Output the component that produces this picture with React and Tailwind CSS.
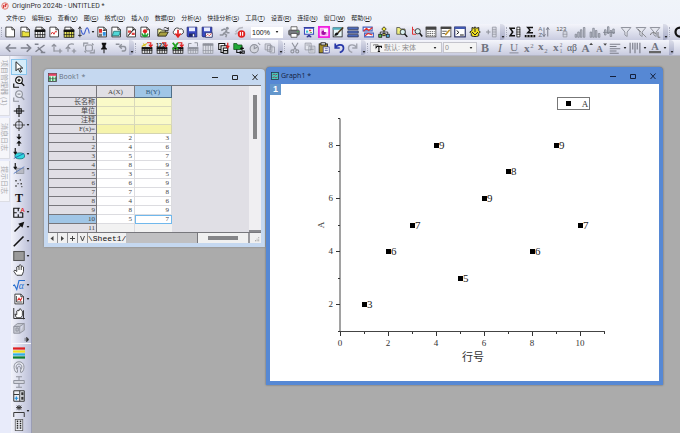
import React from "react";

const INK = "#111111";
const DIM = "#8f929c";

function Sheet({ children }) {
  return (
    <>
      <path d="M2.5 1.5h8l3.5 3.5v9.5h-11.5z" fill="#fff" stroke={INK} />
      <path d="M10.5 1.5v3.5h3.5" fill="none" stroke={INK} />
      {children}
    </>
  );
}

function Cells({ color = INK, fill = "#fff", y = 5 }) {
  return (
    <>
      <rect x="1.5" y={y + 0.5} width="13" height={15 - y - 0.5} fill={fill} stroke={color} />
      <rect x="1" y={y} width="14" height="3" fill={color} />
      <path d={`M5 ${y}V15M8.2 ${y}V15M11.5 ${y}V15M1 11.5H15`} stroke={color} fill="none" />
    </>
  );
}

function RedArrow() {
  return <path d="M8 1h5v4M10.5 3.5l2.5 3 2.5-3" fill="none" stroke="#e02020" strokeWidth="1.6" />;
}

function Glyph({ x = 8, y = 13, size = 14, color = INK, bold, italic, sans, children }) {
  return (
    <text
      x={x}
      y={y}
      fontSize={size}
      textAnchor="middle"
      fill={color}
      fontWeight={bold ? 700 : 400}
      fontStyle={italic ? "italic" : "normal"}
      fontFamily={sans ? "'Liberation Sans', sans-serif" : "'Liberation Serif', serif"}
    >
      {children}
    </text>
  );
}

const icons = {
  newProject: <Sheet />,
  newFolder: (
    <Sheet>
      <path d="M4 7h3l1 1h6v6H4z" fill="#e8e040" stroke="#555520" />
    </Sheet>
  ),
  newBook: (
    <Sheet>
      <Cells y={5} />
    </Sheet>
  ),
  newGraph: (
    <Sheet>
      <path d="M4 11l2-3 2 3 2-4 2 1" fill="none" stroke="#e03030" strokeWidth="1.3" />
    </Sheet>
  ),
  newMatrix: (
    <Sheet>
      <Cells y={5} fill="#f2ee60" />
    </Sheet>
  ),
  newFunction: (
    <>
      <path d="M2.5 1v14M0 12.5h5M2.5 1l-2 3M2.5 1l2 3" stroke={INK} fill="none" />
      <path d="M4 5c2 8 4 8 6 1s4-3 5 4" fill="none" stroke="#4060d0" strokeWidth="1.4" />
    </>
  ),
  newLayout: (
    <Sheet>
      <path d="M4 4h4v5H4z" fill="#e03030" />
      <path d="M9 8h4v5H9z" fill="#3090e0" />
      <path d="M4 11h4M4 13h4M9 6h4" stroke={INK} />
    </Sheet>
  ),
  newNotes: (
    <Sheet>
      <path d="M5 7h9l-2 6H3z" fill="#50d8d8" stroke="#106060" />
    </Sheet>
  ),
  newImage: (
    <Sheet>
      <path d="M4 13L12 4" stroke={INK} strokeWidth="1.4" />
      <path d="M4 6h4v3H4zM9 9h4v3H9z" fill="#e04040" />
    </Sheet>
  ),
  newFlower: (
    <Sheet>
      <path d="M8 9v5M4 10c1 3 3 4 4 4s3-1 4-4" stroke="#20a030" strokeWidth="2" fill="none" />
      <circle cx="8" cy="7" r="2.8" fill="#e02020" />
    </Sheet>
  ),
  open: (
    <>
      <path d="M1 13V4h4l1 1.5h5V8" fill="#f0f0a0" stroke={INK} />
      <path d="M1 13.5L4 8h11l-3 5.5z" fill="#a8a040" stroke={INK} />
      <path d="M9 3c2-2 4-1 5 1l1-2v4h-4" fill="none" stroke={INK} />
    </>
  ),
  cloud: (
    <>
      <path d="M4 11H3a3 3 0 010-5 4 4 0 017-2 3.5 3.5 0 013 7h-1" fill="#fff" stroke={INK} />
      <path d="M8 5v8M4.5 10L8 14.500l3.5-4.5" fill="none" stroke="#e02020" strokeWidth="2.2" />
    </>
  ),
  save: (
    <>
      <path d="M1.5 1.5h13v13h-12l-1-1z" fill="#3848c0" stroke="#202870" />
      <path d="M4 2h8v5H4z" fill="#e8ecff" />
      <path d="M4 10h8v4H4z" fill="#202860" />
      <path d="M9 11h2v3H9z" fill="#fff" />
    </>
  ),
  saveTemplate: (
    <>
      <path d="M1.5 1.5h13v13h-12l-1-1z" fill="#3848c0" stroke="#202870" />
      <path d="M4 2h8v5H4z" fill="#e8ecff" />
      <path d="M6 9h9v6H6z" fill="#fff" stroke="#202860" />
      <path d="M7 13l2-2 2 2 3-3" stroke="#e03030" fill="none" />
    </>
  ),
  run: (
    <>
      <circle cx="11" cy="3" r="2" fill={DIM} />
      <path d="M3 6l4-2 3 2-3 4 3 2-1 3M7 9l-2 3H1M9 6l2 3h3" stroke={DIM} strokeWidth="2" fill="none" />
    </>
  ),
  pause: (
    <>
      <path d="M2 8l5-5 5-1M1 11l4-2" stroke="#b8b8c0" strokeWidth="2" fill="none" />
      <circle cx="10" cy="10.5" r="5" fill="#e02020" />
      <path d="M8.500 8v5M11.500 8v5" stroke="#fff" strokeWidth="1.5" />
    </>
  ),
  print: (
    <>
      <path d="M4 1h8v5H4z" fill="#fff" stroke="#444" />
      <rect x="1" y="5.5" width="14" height="6.5" rx="1" fill="#777a80" stroke="#444" />
      <path d="M4 10h8v5H4z" fill="#fff" stroke="#444" />
      <path d="M12 7.5h2" stroke="#40d040" />
    </>
  ),
  slides: (
    <>
      <path d="M1 2h14M8 12v3M5 15l3-3 3 3" stroke="#303890" fill="none" strokeWidth="1.5" />
      <rect x="2" y="3" width="12" height="8" fill="#fff" stroke="#4050c0" strokeWidth="1.5" />
      <path d="M4 6h3v3H4z" fill="#40c0d0" />
      <path d="M8 5h3v2H8z" fill="#e04040" />
      <path d="M9 8h3v1H9z" fill="#30a030" />
    </>
  ),
  magenta: (
    <>
      <rect x="0" y="0" width="16" height="16" fill="#f020e0" />
      <path d="M3 3h10v10H3z" fill="#f8a0f0" stroke="#fff" />
      <circle cx="7.5" cy="9" r="3" fill="#a010a0" />
      <path d="M8 4h5v4H8z" fill="#fff" />
    </>
  ),
  brush: (
    <>
      <rect x="1.5" y="2.5" width="12" height="12" fill="#e8f8fa" stroke={INK} />
      <path d="M1 2h13v3H1z" fill="#50b0c0" />
      <path d="M15 2L8 9" stroke="#4a3010" strokeWidth="2" />
      <path d="M3 13c1-4 3-5 5-4s0 4-5 4z" fill={INK} />
    </>
  ),
  rows: <path d="M1 1.5h14v3H1zM1 6.5h14v3H1zM1 11.5h14v3H1z" fill="#5070c8" stroke="#283050" />,
  layers: (
    <>
      <path d="M1.5 1.5h12v5h-12zM3.5 9.5h12v5h-12z" fill="#fff" stroke="#4060c0" strokeWidth="1.5" />
      <path d="M2 7l4-4 3 3 5-4M4 13l4-3 6 2" stroke="#e03030" fill="none" strokeWidth="1.5" />
    </>
  ),
  tree: (
    <>
      <path d="M8 4v5M3 11V8h10v3" stroke={INK} fill="none" />
      <path d="M8 1l3 3-3 3-3-3z" fill="#f0e840" stroke={INK} />
      <rect x="1" y="11" width="4" height="4" fill="#50c050" stroke={INK} />
      <rect x="6.5" y="10" width="3" height="3" fill="#e8e040" stroke={INK} />
      <rect x="11" y="11" width="4" height="4" fill="#50b0e0" stroke={INK} />
    </>
  ),
  findFolder: (
    <>
      <path d="M1 11V2h4l1 2h6v7z" fill="#f0f080" stroke="#444" />
      <circle cx="9" cy="8" r="3.5" fill="#d8f0f0" stroke={INK} />
      <path d="M11.5 10.5L15 14.5" stroke={INK} strokeWidth="2" />
    </>
  ),
  findGraph: (
    <>
      <path d="M2 1v10h5M2 4l3 2" stroke="#e03030" fill="none" strokeWidth="1.3" />
      <circle cx="9" cy="7" r="3.5" fill="#d8f0f0" stroke={INK} />
      <path d="M11.5 9.5L15 14" stroke={INK} strokeWidth="2" />
    </>
  ),
  calendar: (
    <>
      <rect x="1.5" y="1.5" width="13" height="13" fill="#fff" stroke="#333" />
      <path d="M1 1h14v4H1z" fill="#444" />
      <path d="M3 7.5h10M3 10h10M3 12.5h10" stroke="#333" strokeDasharray="2 1" />
    </>
  ),
  editPanel: (
    <>
      <rect x="1.5" y="1.5" width="13" height="13" fill="#fff" stroke="#333" />
      <path d="M1 1h14v3H1z" fill="#444" />
      <path d="M3 7h6M3 10h4" stroke="#333" />
      <path d="M13 5l-6 7" stroke="#c09020" strokeWidth="2" />
    </>
  ),
  console: (
    <>
      <rect x="1" y="1.5" width="14" height="13" fill="#fff" stroke="#222a60" strokeWidth="1.5" />
      <path d="M1 1h14v3H1z" fill="#4058b0" />
      <path d="M3.5 6l3 2.5-3 2.5M8 12h5" stroke={INK} fill="none" strokeWidth="1.3" />
    </>
  ),
  gear: (
    <>
      <path d="M1 8l3-2V2l3 1 1-2 2 2 3-1v4l2 2-2 2v3l-3 1H6l-3-1v-3z" fill="#f0e020" stroke="#222" strokeWidth="1.3" />
      <path d="M4 8l4 4 4-4M8 3v5" stroke="#222" fill="none" strokeWidth="1.3" />
    </>
  ),
  addColumn: (
    <>
      <path d="M0 8h6M3 5v6" stroke={DIM} strokeWidth="1.4" />
      <path d="M8.5 1.5h5v13h-5zM8.5 5h5M8.5 8h5M8.5 11h5" fill="#d8dae4" stroke={DIM} />
    </>
  ),
  sumColumn: (
    <>
      <path d="M8 3H1.5L5 8l-3.5 5H8" fill="none" stroke={INK} strokeWidth="2" />
      <path d="M10.5 1.5h4v13h-4zM10 5h5M10 8h5M10 11h5" fill="#fff" stroke={INK} />
    </>
  ),
  sumRow: (
    <>
      <path d="M12 2H5l3 3.5L5 9h7" fill="none" stroke={INK} strokeWidth="2" />
      <path d="M1 12h14v3H1z" fill={INK} />
      <path d="M4 12v3M8 12v3M12 12v3" stroke="#fff" />
    </>
  ),
  sort: (
    <>
      <Glyph x={3} y={7} size={8} color="#666a78" sans>A</Glyph>
      <Glyph x={3} y={15} size={8} color="#666a78" sans>Z</Glyph>
      <path d="M8 2v12M6 11l2 3 2-3M13 14V2M11 5l2-3 2 3" stroke="#777a88" fill="none" strokeWidth="1.3" />
    </>
  ),
  numbers: (
    <>
      <Glyph x={7} y={6} size={8} color="#555" sans>123</Glyph>
      <path d="M9.5 7.5h5v7h-5zM9 11h6" fill="#d8dae4" stroke={DIM} />
    </>
  ),
  stairs: <path d="M1.5 11h2v4h-2zM5 8h2v7H5zM8.5 5h2v10h-2zM12.5 2h2v13h-2z" fill="#c4c7d2" stroke="#7c808c" />,
  bars: <path d="M1.5 8h2v7h-2zM5 3h2v12H5zM8.5 6h2v9h-2zM12.5 10h2v5h-2z" fill="#c4c7d2" stroke="#7c808c" />,
  bars2: <path d="M0 8.500h16M2 5h2v7H2zM6 1h2v9H6zM9.5 6h2v8h-2zM13 4h2v6h-2z" fill="#c4c7d2" stroke="#7c808c" />,
  funnel: <path d="M1.5 2h13l-5 6v6l-3-2V8z" fill="#e4e6ee" stroke={DIM} strokeWidth="1.3" />,
  funnelOff: (
    <>
      <path d="M1.5 2h13l-5 6v6l-3-2V8z" fill="#e4e6ee" stroke={DIM} strokeWidth="1.3" />
      <path d="M9 9l6 6M4 4l4 4" stroke="#777" />
    </>
  ),
  funnelRedo: (
    <>
      <path d="M1.5 2h13l-5 6v6l-3-2V8z" fill="#e4e6ee" stroke={DIM} strokeWidth="1.3" />
      <path d="M2 12c0-4 6-4 8-1M12 8v7h3" stroke="#777" fill="none" strokeWidth="1.3" />
    </>
  ),
  left: <path d="M15 8H2M7 3L2 8l5 5" stroke="#80838f" strokeWidth="2.3" fill="none" />,
  right: <path d="M1 8h13M9 3l5 5-5 5" stroke="#80838f" strokeWidth="2.3" fill="none" />,
  cutLink: <path d="M1 3h5M2 13L14 4M5 7l7 7M9 14h6" stroke="#80838f" strokeWidth="2" fill="none" />,
  addUp: <path d="M4 13V3M1 6l3-3 3 3M4 12h7M12 9v6M9 12h6" stroke={DIM} strokeWidth="1.6" fill="none" />,
  addDown: <path d="M4 13V6c0-3 4-4 8-3M1 9l3-3 3 3M12 9v6M9 12h6" stroke={DIM} strokeWidth="1.6" fill="none" />,
  recalc: (
    <>
      <rect x="3.500" y="4" width="9" height="8" rx="2" fill="none" stroke={DIM} strokeWidth="1.5" />
      <path d="M1 6V1.500h6M15 10v4.500H9M4 14l-2-2M12 2l2 2" stroke={DIM} strokeWidth="1.5" fill="none" />
    </>
  ),
  pin: (
    <>
      <path d="M5 1h6v2l-1 1v3l2 2v1H4V9l2-2V4L5 3z" fill={INK} />
      <path d="M8 10v5" stroke={INK} strokeWidth="1.3" />
    </>
  ),
  back: <path d="M1 3h5M7 6h5c3 0 3 6 0 6H9M9 3L6 6l3 3" stroke={DIM} strokeWidth="1.8" fill="none" />,
  importWizard: (
    <>
      <Cells y={7} />
      <path d="M1 6l7-4M3 2l3 4" stroke="#d8c020" strokeWidth="1.6" />
      <RedArrow />
    </>
  ),
  import123: (
    <>
      <Cells y={7} />
      <Glyph x={6} y={6} size={7} bold sans>123</Glyph>
      <RedArrow />
    </>
  ),
  importExcel: (
    <>
      <Cells y={7} />
      <path d="M1 1l7 9M8 1l-7 9" stroke="#20a020" strokeWidth="2.5" />
      <RedArrow />
    </>
  ),
  importDim: (
    <>
      <path d="M2 7V2h4M10 1h4v5" stroke={DIM} fill="none" strokeWidth="1.3" />
      <Cells y={7} color={DIM} fill="#e0e2ea" />
    </>
  ),
  importDim2: <Cells y={2} color={DIM} fill="#e0e2ea" />,
  importMulti: (
    <>
      <path d="M1 2h8v8H1z" fill="#fff" stroke={INK} strokeWidth="1.4" />
      <path d="M4 5h8v9H4z" fill="#fff" stroke={INK} strokeWidth="1.4" />
      <path d="M7 8h6v7H7zM7 11.500h6" fill="#fff" stroke={INK} strokeWidth="1.4" />
      <path d="M13 1v6M11 5l2 3 2-3" stroke="#e02020" strokeWidth="1.6" fill="none" />
    </>
  ),
  addFolder: (
    <>
      <path d="M1 10V2h4l1 2h6v6z" fill="#20a838" stroke="#105018" />
      <path d="M12 6v5M9.500 8.500h5M5 10v4h6M9 12l2 2-2 2M12 12h3v3h-3z" stroke={INK} strokeWidth="1.4" fill="none" />
    </>
  ),
  clock: (
    <>
      <circle cx="7" cy="9" r="5.5" fill="#d4d6de" stroke={DIM} strokeWidth="1.4" />
      <path d="M7 5v4l4-2M12 1l3 3" stroke={DIM} strokeWidth="1.4" fill="none" />
    </>
  ),
  copies: <path d="M1.5 2.5h7v8h-7zM4.5 4.5h6v8h-6zM8 6.5h6v8H8z" fill="#d8dae4" stroke={DIM} />,
  cut: (
    <>
      <path d="M4 1l6 10M12 1L6 11" stroke={DIM} strokeWidth="1.5" />
      <circle cx="4.5" cy="12.5" r="2" fill="none" stroke={DIM} strokeWidth="1.5" />
      <circle cx="11" cy="12.5" r="2" fill="none" stroke={DIM} strokeWidth="1.5" />
    </>
  ),
  copy: <path d="M1.5 1.5h8v9h-8zM6.5 5.5h8v9h-8zM8 8h5M8 10h5M8 12h5M3 4h5" fill="#e4e6ee" stroke={DIM} />,
  paste: (
    <>
      <rect x="1.5" y="2.5" width="11" height="12" fill="#a89028" stroke={INK} />
      <rect x="4" y="1" width="6" height="3" fill="#ddd" stroke={INK} />
      <path d="M7 6.5h8v8H7zM9 9h4M9 11.5h4" fill="#fff" stroke="#303890" />
    </>
  ),
  undo: <path d="M3 2v6h6M3 8c3-6 11-5 11 0 0 3-2 5-5 6" fill="none" stroke="#2838a8" strokeWidth="2.3" />,
  redo: <path d="M13 2v6H7M13 8C10 2 2 3 2 8c0 3 2 5 5 6" fill="none" stroke="#a0a3ae" strokeWidth="1.8" />,
  bold: <Glyph bold size={16} color="#70737f">B</Glyph>,
  italic: <Glyph italic size={16} color="#70737f">I</Glyph>,
  underline: (
    <>
      <Glyph size={15} y={12} color="#70737f">U</Glyph>
      <path d="M2 14.5h12" stroke="#70737f" />
    </>
  ),
  sup: (
    <>
      <Glyph x={5} size={15} bold color="#70737f">x</Glyph>
      <Glyph x={12} y={8} size={9} color="#70737f">2</Glyph>
    </>
  ),
  sub: (
    <>
      <Glyph x={5} y={11} size={15} bold color="#70737f">x</Glyph>
      <Glyph x={12} y={14} size={9} color="#70737f">2</Glyph>
    </>
  ),
  supsub: (
    <>
      <Glyph x={5} y={12} size={15} bold color="#70737f">x</Glyph>
      <Glyph x={12} y={7} size={7} color="#70737f">2</Glyph>
      <Glyph x={12} y={15} size={7} color="#70737f">1</Glyph>
    </>
  ),
  greek: <Glyph size={13} y={12} color="#555864">αβ</Glyph>,
  fontUp: (
    <>
      <Glyph x={6} y={13} size={15} bold color="#70737f">A</Glyph>
      <path d="M11 4l2.5-3L16 4z" fill="#444" />
    </>
  ),
  fontDown: (
    <>
      <Glyph x={6} y={13} size={12} bold color="#70737f">A</Glyph>
      <path d="M11 2h5l-2.5 3z" fill="#444" />
    </>
  ),
  align: <path d="M1 3h14M1 6h9M1 9h14M1 12h9M1 15h12" stroke="#777a86" strokeWidth="1.3" />,
  columns: <path d="M1.5 1v14M5 1v9M8 1v14M11 1v9M14.5 1v14" stroke="#777a86" strokeWidth="1.5" />,
  fontColor: (
    <>
      <Glyph y={11} size={14} bold color="#70737f">A</Glyph>
      <path d="M0 12h16v3H0z" fill="#666" />
    </>
  ),
  ring: <circle cx="8" cy="8" r="6" fill="none" stroke={INK} strokeWidth="3" />,
  pointer: <path d="M4 1v12l3-3 2.5 5 2-1L9 9.500h4z" fill="#fff" stroke={INK} strokeWidth="1.2" />,
  zoomIn: (
    <>
      <circle cx="8" cy="5.5" r="4.5" fill="#fff" stroke={INK} strokeWidth="1.5" />
      <path d="M11 9l4 4M6 5.5h4M8 3.5v4M1 10v5h7" stroke={INK} strokeWidth="1.6" fill="none" />
    </>
  ),
  zoomOut: (
    <>
      <circle cx="8" cy="5.5" r="4.5" fill="#e8eaf2" stroke={DIM} strokeWidth="1.5" />
      <path d="M11 9l4 4M6 5.5h4M1 10v5h7" stroke={DIM} strokeWidth="1.6" fill="none" />
    </>
  ),
  crosshair: <path d="M8 0v16M1 8h14M5 5h6v6H5z" fill="none" stroke={INK} strokeWidth="1.4" />,
  target: (
    <>
      <circle cx="8" cy="8" r="5" fill="none" stroke="#444" strokeWidth="1.3" />
      <path d="M8 0v6M8 10v6M0 8h6M10 8h6" stroke="#444" strokeWidth="1.3" />
      <circle cx="8" cy="8" r="1" fill={INK} />
    </>
  ),
  selector: (
    <>
      <path d="M8 0v6M8 16v-6" stroke={INK} strokeWidth="1.6" />
      <path d="M4.5 3.5h7L8 7.5zM4.5 12.5h7L8 8.5z" fill={INK} />
    </>
  ),
  mask: (
    <>
      <ellipse cx="9" cy="10.5" rx="6.5" ry="4" fill="#30d8e0" stroke="#106870" />
      <path d="M1 14l14-7" stroke="#2050a0" />
      <path d="M3 0v7M1 5l2 3 2-3" stroke={INK} fill="none" strokeWidth="1.5" />
    </>
  ),
  maskOff: (
    <>
      <rect x="4.5" y="7" width="10" height="7" fill="#b8bac4" stroke={DIM} />
      <path d="M1 14l14-9" stroke="#6080c0" strokeWidth="1.3" />
      <path d="M3 0v7M1 5l2 3 2-3" stroke={INK} fill="none" strokeWidth="1.5" />
    </>
  ),
  dots: <path d="M3 4h2v2H3zM9 3h1.500v2H9zM6 8h1.500v1.500H6zM3 11h2v2H3zM10 8h2v2h-2zM11 12h1.500v1.500H11z" fill="#444" />,
  text: <Glyph bold size={16} y={13}>T</Glyph>,
  annotate: (
    <>
      <path d="M9 3H1v12h12V9M1 9h4M9 9h4M7 3v4M7 11v4" stroke={INK} fill="none" strokeWidth="1.5" />
      <Glyph x={13} y={8} size={8} bold color="#e02020" sans>A</Glyph>
    </>
  ),
  arrow: (
    <>
      <path d="M2 14L11 5" stroke={INK} strokeWidth="2" />
      <path d="M15 1l-8 2.5 5.5 5.5z" fill={INK} />
    </>
  ),
  line: <path d="M1 15L14 2" stroke={INK} strokeWidth="2.2" />,
  rect: <rect x="1" y="2" width="14" height="12" fill="#9a9a9a" stroke="#555" strokeWidth="1.4" />,
  hand: (
    <path
      d="M4 14L1 9.500 2.500 8 5 10V4l1.500-1L8 4V2l1.500-1L11 2v2l1.500-1L14 4v6l-2 5H5zM8 4v4M11 4v4"
      fill="#fff"
      stroke="#333"
      strokeWidth="1.2"
    />
  ),
  sqrt: (
    <>
      <path d="M0 9l2-1 3 6L8 2h8" fill="none" stroke="#2870d0" strokeWidth="1.5" />
      <Glyph x={11} y={13} size={13} italic color="#2870d0">α</Glyph>
    </>
  ),
  chart: (
    <Sheet>
      <path d="M4.5 4v8h8" stroke={INK} fill="none" />
      <path d="M6 10l2-3 2 3 2-4" stroke="#e03030" strokeWidth="1.5" fill="none" />
    </Sheet>
  ),
  handCrop: (
    <>
      <path d="M1 0v14h15M14 3v12" stroke="#333" fill="none" strokeWidth="1.3" />
      <path d="M4 12L2.500 8 5 9V4l1.500-1L8 4V2l2-1 1 2 1.500 1v6l-2 3H5z" fill="#fff" stroke="#333" strokeWidth="1.2" />
    </>
  ),
  cube: <path d="M1 6h8v9H1zM1 6l5-4h9l-6 4M15 2v9l-6 4M4 8h3v4H4z" fill="#c4c7d0" stroke={DIM} strokeWidth="1.2" />,
  colors: (
    <>
      <path d="M0 2h16" stroke="#e02020" strokeWidth="3" />
      <path d="M0 6h16" stroke="#f0e020" strokeWidth="3" />
      <path d="M0 10h16" stroke="#30b0e0" strokeWidth="3" />
      <path d="M0 14h16" stroke="#108030" strokeWidth="3" />
    </>
  ),
  horseshoe: (
    <>
      <path d="M4 15c-4-4-4-14 4-14s8 10 4 14h-2v-3c3-3 2-8-2-8s-5 5-2 8v3z" fill="#e4e6ee" stroke={DIM} strokeWidth="1.3" />
      <path d="M6 11c-1-5 5-5 4 0" stroke={DIM} fill="none" strokeWidth="1.3" />
    </>
  ),
  distribute: <path d="M4 1h8M8 1v5M1 6h14v4H1zM8 10v5M4 15h8" fill="#d4d6de" stroke={DIM} strokeWidth="1.3" />,
  merge: (
    <>
      <path d="M1 1h14v14H1zM1 6h7M9 1v14" fill="#eceef4" stroke="#333" strokeWidth="1.3" />
      <path d="M11 3h3v4h-3zM11 9h3v4h-3z" fill="#333" />
      <path d="M2 11h5M4.5 8.5v5" stroke="#2090e0" strokeWidth="1.6" />
    </>
  ),
  bracket: <path d="M1 16V10h14v6M5 1l6 5M11 1L5 6M8 0v7M4 3.500h8" fill="none" stroke="#333" strokeWidth="1.3" />,
  digits: (
    <>
      <rect x="3" y="0.5" width="10" height="15" fill="#eceef4" stroke="#555" />
      <path d="M5 3h2M9 3h2M5 6h2M9 6h2M5 9h2M9 9h2M5 12h2M9 12h2" stroke="#222" strokeWidth="1.8" />
    </>
  ),
};

function ToolIcon({ name, active }) {
  return (
    <button
      type="button"
      aria-label={name}
      className={
        active
          ? "flex h-[14px] w-[14px] shrink-0 items-center justify-center bg-[#d4ecfa] outline-1 outline-[#88c4ec]"
          : "flex h-[14px] w-[14px] shrink-0 items-center justify-center"
      }
    >
      <svg viewBox="0 0 16 16" className="h-[12px] w-[12px]" aria-hidden="true">
        {icons[name]}
      </svg>
    </button>
  );
}

function Group({ names, className }) {
  return (
    <div className={"flex shrink-0 items-center justify-between " + className}>
      {names.map((n) => (
        <ToolIcon key={n} name={n} />
      ))}
    </div>
  );
}

function Caret({ className = "" }) {
  return (
    <svg viewBox="0 0 4 3" className={"h-[2px] w-[4px] shrink-0 " + className} aria-hidden="true">
      <path d="M0 0h4L2 3z" fill="#222" />
    </svg>
  );
}

function Overflow() {
  return (
    <button
      type="button"
      aria-label="overflow"
      className="ml-[1px] flex h-full w-[5px] shrink-0 items-end justify-center rounded-r-sm bg-linear-to-b from-[#dcdeea] to-[#a4a8c4] pb-[2px]"
    >
      <Caret />
    </button>
  );
}

function Grip() {
  return <div className="mx-[1px] h-[10px] w-0 shrink-0 border-l border-dotted border-[#a8abbc]" />;
}

function Combo({ label, value, className, muted }) {
  return (
    <div className={"relative flex h-[11px] shrink-0 items-center border " + className}>
      <select
        aria-label={label}
        defaultValue={value}
        className={
          "h-full w-full appearance-none bg-transparent text-[7px] leading-[9px] outline-none " +
          (muted ? "text-[#8a8a8a]" : "text-[#111]")
        }
      >
        <option>{value}</option>
      </select>
      <Caret className="pointer-events-none absolute right-[3px]" />
    </div>
  );
}

const menus = [
  ["文件", "F"], ["编辑", "E"], ["查看", "V"], ["图", "G"], ["格式", "O"], ["插入", "I"], ["数据", "D"],
  ["分析", "A"], ["快捷分析", "S"], ["工具", "T"], ["设置", "R"], ["连接", "N"], ["窗口", "W"], ["帮助", "H"],
];

function Header() {
  return (
    <header className="shrink-0 bg-linear-to-b from-[#f0f4f9] to-[#eceefa]">
      <div className="flex h-[12px] items-center gap-[3px] pl-px">
        <svg viewBox="0 0 16 16" className="h-[8px] w-[8px]" aria-hidden="true">
          <circle cx="8" cy="8" r="6.5" fill="#f8d8d4" stroke="#e08078" strokeWidth="2" />
          <path d="M5 12V6l4 4V4l3 2" stroke="#d84040" strokeWidth="2" fill="none" />
        </svg>
        <h1 className="font-[Roboto,sans-serif] text-[7px] leading-[10px] text-[#333]">
          OriginPro 2024b - UNTITLED *
        </h1>
      </div>
      <nav className="flex h-[12px] items-center gap-[6px] pl-[6px]">
        {menus.map(([label, key]) => (
          <button key={key} type="button" className="shrink-0 text-[6px] leading-[10px] whitespace-nowrap text-[#222]">
            {label}(<span className="underline">{key}</span>)
          </button>
        ))}
      </nav>
      <div className="flex h-[16px] items-center overflow-hidden bg-linear-to-b from-[#f4f5fb] to-[#c9cce0]">
        <Grip />
        <Group className="w-[88px]" names={["newProject", "newFolder", "newBook", "newGraph", "newMatrix", "newFunction"]} />
        <Caret />
        <Group className="w-[57px]" names={["newLayout", "newNotes", "newImage", "newFlower"]} />
        <Group className="ml-[4px] w-[58px]" names={["open", "cloud", "save", "saveTemplate"]} />
        <Group className="ml-[4px] w-[29px]" names={["run", "pause"]} />
        <Combo label="缩放" value="100%" className="ml-[4px] w-[32px] border-white bg-white" />
        <Group className="ml-[4px] w-[88px]" names={["print", "slides", "magenta", "brush", "rows", "layers"]} />
        <Group className="ml-[2px] w-[14px]" names={["tree"]} />
        <Group className="ml-[4px] w-[87px]" names={["findFolder", "findGraph", "calendar", "editPanel", "console", "gear"]} />
        <Group className="ml-[3px] w-[14px]" names={["addColumn"]} />
        <Overflow />
        <Grip />
        <Group className="w-[43px]" names={["sumColumn", "sumRow", "sort"]} />
        <Group className="ml-[4px] w-[14px]" names={["numbers"]} />
        <Group className="ml-[4px] w-[43px]" names={["stairs", "bars", "bars2"]} />
        <Group className="ml-[3px] w-[43px]" names={["funnel", "funnelOff", "funnelRedo"]} />
        <Overflow />
        <Grip />
        <Group className="ml-[2px] w-[14px]" names={["ring"]} />
      </div>
      <div className="flex h-[16px] items-center overflow-hidden border-b border-[#b4b6c6] bg-linear-to-b from-[#f4f5fb] to-[#c9cce0]">
        <Group className="ml-[4px] w-[43px]" names={["left", "right", "cutLink"]} />
        <Group className="ml-[3px] w-[28px]" names={["addUp", "addDown"]} />
        <Group className="ml-[4px] w-[29px]" names={["recalc", "pin"]} />
        <Group className="ml-[3px] w-[14px]" names={["back"]} />
        <Overflow />
        <Grip />
        <Group className="ml-[3px] w-[75px]" names={["importWizard", "import123", "importExcel", "importDim", "importDim2"]} />
        <Group className="ml-[2px] w-[60px]" names={["importMulti", "addFolder", "clock", "copies"]} />
        <Overflow />
        <Grip />
        <Group className="ml-[2px] w-[72px]" names={["cut", "copy", "paste", "undo", "redo"]} />
        <Overflow />
        <Grip />
        <div className="ml-[1px] flex h-[11px] w-[72px] shrink-0 items-center border border-[#c4c4cc] bg-[#f4f4f4] pl-[2px]">
          <svg viewBox="0 0 16 16" className="h-[9px] w-[9px] shrink-0" aria-hidden="true">
            <path d="M1 3h8v3M1 3v2M5 3v8" stroke="#777" strokeWidth="1.5" fill="none" />
            <path d="M6 6h9v3M6 6v3M10.500 6v9M8.500 15h4" stroke={INK} strokeWidth="2" fill="none" />
          </svg>
          <Combo label="字体" value="默认: 宋体" muted className="w-[59px] border-transparent pl-[1px]" />
        </div>
        <Combo label="字号" value="0" muted className="ml-[1px] w-[34px] border-[#c4c4cc] bg-[#f4f4f4] pl-[1px]" />
        <Group
          className="ml-[1px] w-[130px]"
          names={["bold", "italic", "underline", "sup", "sub", "supsub", "greek", "fontUp", "fontDown"]}
        />
        <Group className="w-[14px]" names={["align"]} />
        <Caret className="mx-px" />
        <Group className="w-[14px]" names={["columns"]} />
        <Caret className="mx-px" />
        <Group className="w-[14px]" names={["fontColor"]} />
        <Caret className="mx-px" />
        <Overflow />
      </div>
    </header>
  );
}

const drawTools = [
  ["pointer"], ["zoomIn"], ["zoomOut"], ["crosshair"], ["target", 1], ["selector"], ["mask", 1], ["maskOff", 1],
  ["dots"], ["text"], ["annotate", 1], ["arrow", 1], ["line", 1], ["rect", 1], ["hand"], ["sqrt", 1], ["chart", 1],
  ["handCrop"], ["cube"],
];
const objectTools = [["colors"], ["horseshoe"], ["distribute"], ["merge"], ["bracket", 1], ["digits"]];

function ToolColumn({ tools, className }) {
  return (
    <div className={"flex flex-col justify-between " + className}>
      {tools.map(([name, more]) => (
        <div key={name} className="flex items-center">
          <ToolIcon name={name} active={name === "pointer"} />
          {more ? <Caret /> : null}
        </div>
      ))}
    </div>
  );
}

function Sidebar() {
  return (
    <aside className="flex shrink-0 bg-[#e8ebfa]">
      <div className="flex w-[11px] flex-col gap-[2px] text-[7px] leading-[9px] text-[#a6a8ae]">
        {[
          ["项目管理器 (1)", "h-[60px] pt-[4px]"],
          ["消息日志", "h-[41px] pt-[5px]"],
          ["提示日志", "h-[41px] pt-[5px]"],
        ].map(([label, size]) => (
          <button
            key={label}
            type="button"
            className={
              "w-[10px] border-r border-b border-[#dcdde4] bg-[#f6f6fa] text-left [text-orientation:sideways] [writing-mode:vertical-rl] " +
              size
            }
          >
            {label}
          </button>
        ))}
      </div>
      <div className="w-[21px] border-r border-[#9a9db4] bg-linear-to-r from-[#f2f3fb] to-[#bcc0d8] pl-px">
        <div className="mx-[3px] h-[4px] w-[12px] border-b border-dotted border-[#b4b6c4]" />
        <ToolColumn tools={drawTools} className="h-[275px]" />
        <div className="flex h-[9px] items-center justify-end border-b border-[#f8f8fc] pr-[2px]">
          <svg viewBox="0 0 6 6" className="h-[5px] w-[5px]" aria-hidden="true">
            <path d="M0 1v4M2 1v4M3 0l3 3-3 3z" fill="#333" stroke="#333" strokeWidth="0.5" />
          </svg>
        </div>
        <ToolColumn tools={objectTools} className="mt-[2px] h-[86px]" />
      </div>
    </aside>
  );
}

function WindowButtons({ color }) {
  return (
    <div className="mr-[2px] flex w-[48px] items-center justify-between">
      {[
        ["最小化", "M1 4.5h6"],
        ["最大化", "M1.5 2.5h5v4h-5z"],
        ["关闭", "M1.5 1.5l5 5.5M6.5 1.5l-5 5.5"],
      ].map(([label, d]) => (
        <button key={label} type="button" aria-label={label} className="h-[8px] w-[8px]">
          <svg viewBox="0 0 8 8" className="h-[8px] w-[8px]" aria-hidden="true">
            <path d={d} fill="none" stroke={color} />
          </svg>
        </button>
      ))}
    </div>
  );
}

const metaRows = ["长名称", "单位", "注释", "F(x)="];
const data = [
  [2, 3], [4, 6], [5, 7], [8, 9], [3, 5], [6, 9], [7, 8], [4, 6], [8, 9], [5, 7],
];

function BookWindow() {
  const head = "h-[9px] border-r border-b border-[#77777c] pr-px text-right font-normal";
  const cell = "h-[9px] border-r border-b border-[#dcdce0] bg-white pr-[2px] text-right";
  return (
    <section
      aria-label="Book1"
      className="absolute top-[13px] left-[12px] flex h-[178px] w-[221px] flex-col rounded-t-sm bg-[#c5d8f0] px-[4px] pb-[4px] shadow-[0_0_2px_#777]"
    >
      <div className="flex h-[16px] shrink-0 items-center">
        <svg viewBox="0 0 16 16" className="h-[9px] w-[9px]" aria-hidden="true">
          <rect x="1" y="1" width="14" height="14" fill="#f4f4f4" stroke="#444" strokeWidth="1.5" />
          <path d="M1 1h14v4H1z" fill="#e04060" />
          <path d="M2 6h3v8H2zM7 6h3v8H7zM12 6h2v8h-2z" fill="#40b060" />
          <path d="M1 10h14" stroke="#444" />
        </svg>
        <h2 className="ml-[2px] flex-1 font-['Open_Sans',sans-serif] text-[7px] leading-[10px] text-[#667080]">Book1 *</h2>
        <WindowButtons color="#222" />
      </div>
      <div className="flex min-h-0 flex-1 border-t border-[#77777c] bg-[#e0dfe5]">
        <div className="min-w-0 flex-1 overflow-hidden">
          <table className="w-[124px] table-fixed border-separate border-spacing-0 border-l border-[#77777c] font-['Liberation_Serif','Noto_Sans_CJK_SC',serif] text-[7px] leading-[8px] text-[#444]">
            <colgroup>
              <col className="w-[48px]" />
              <col className="w-[38px]" />
              <col className="w-[37px]" />
            </colgroup>
            <thead>
              <tr>
                <td className="h-[12px] border-r border-b border-[#77777c]" />
                <th className="border-r border-b border-[#77777c] font-normal">A(X)</th>
                <th className="border-r border-b border-[#4f6f88] bg-[#a0c6e6] font-normal text-[#2f5878]">B(Y)</th>
              </tr>
            </thead>
            <tbody>
              {metaRows.map((label, i) => (
                <tr key={label}>
                  <th scope="row" className={head}>{label}</th>
                  <td className={i === 3 ? "border-r border-b border-[#d4d4b0] bg-[#f6f4ac]" : "border-r border-b border-[#d8d8bc] bg-[#fafac8]"} />
                  <td className={i === 3 ? "border-r border-b border-[#d4d4b0] bg-[#f6f4ac]" : "border-r border-b border-[#d8d8bc] bg-[#fafac8]"} />
                </tr>
              ))}
              {data.map(([a, b], i) => (
                <tr key={i}>
                  <th scope="row" className={i === 9 ? head + " bg-[#a0c6e6]" : head}>{i + 1}</th>
                  <td className={cell}>{a}</td>
                  <td className={i === 9 ? cell + " outline-1 -outline-offset-1 outline-[#70b8ec]" : cell}>{b}</td>
                </tr>
              ))}
              <tr>
                <th scope="row" className={head}>11</th>
                <td className="border-r border-[#dcdce0] bg-[#f2f2f2]" />
                <td className="bg-[#f2f2f2]" />
              </tr>
            </tbody>
          </table>
        </div>
        <div className="flex w-[12px] justify-center border-b-2 border-[#8c8c90] bg-[#f0eff2] pt-[9px]">
          <div className="h-[44px] w-[4px] bg-[#858588]" />
        </div>
      </div>
      <div className="flex h-[11px] shrink-0 items-stretch border-t border-[#77777c] bg-[#f0f0f0]">
        {["M5.5 2v5L2.5 4.5z", "M3 2v5l3-2.5z", "M4 2h1v2h2v1H5v2H4V5H2V4h2z", "M2 2h1l1.5 4L6 2h1L5 7H4z"].map((d, i) => (
          <button key={d} type="button" aria-label={"sheet-nav-" + i} className="flex w-[10px] items-center justify-center border-r border-[#909094]">
            <svg viewBox="0 0 9 9" className="h-[9px] w-[9px]" aria-hidden="true">
              <path d={d} fill="#444" />
            </svg>
          </button>
        ))}
        <button type="button" className="font-['Liberation_Mono',monospace] text-[8px] leading-[9px] text-[#111]">
          \Sheet1/
        </button>
        <div className="flex-1 border-r border-[#77777c] bg-[#c0c0c2]" />
        <div className="flex w-[52px] items-center justify-center border-r-2 border-[#9a9a9e]">
          <div className="h-[4px] w-[30px] bg-[#858588]" />
        </div>
        <div className="flex w-[11px] items-end justify-end p-px">
          <svg viewBox="0 0 6 6" className="h-[5px] w-[5px]" aria-hidden="true">
            <path d="M4 0h1v1H4zM2 2h1v1H2zM4 2h1v1H4zM0 4h1v1H0zM2 4h1v1H2zM4 4h1v1H4z" fill="#888" />
          </svg>
        </div>
      </div>
    </section>
  );
}

const labels = [3, 6, 7, 9, 5, 9, 8, 6, 9, 7];
const heights = [2, 4, 5, 8, 3, 6, 7, 4, 8, 5];
const px = (v) => 70 + v * 24;
const py = (v) => Math.round(247 - (v - 1) * 26.6);

function Plot() {
  return (
    <svg
      viewBox="0 0 389 297"
      className="block w-full bg-white font-['Liberation_Serif','Noto_Sans_CJK_SC',serif]"
      role="img"
      aria-label="A"
    >
      <path d="M70 34.5V247.5H335" fill="none" stroke="#444" />
      {[1, 2, 3, 4, 5, 6, 7, 8, 9].map((v) => (
        <path key={v} d={`M${v % 2 ? 68 : 66} ${py(v) + 0.5}H70`} stroke="#333" />
      ))}
      {[0, 1, 2, 3, 4, 5, 6, 7, 8, 9, 10, 11].map((v) => (
        <path key={v} d={`M${px(v) + 0.5} 248V${v % 2 ? 250 : 252}`} stroke="#333" />
      ))}
      {[2, 4, 6, 8].map((v) => (
        <text key={v} x="63" y={py(v) + 3} fontSize="9" textAnchor="end" fill="#333">{v}</text>
      ))}
      {[0, 2, 4, 6, 8, 10].map((v) => (
        <text key={v} x={px(v)} y="262" fontSize="9" textAnchor="middle" fill="#333">{v}</text>
      ))}
      {heights.map((h, i) => (
        <g key={i}>
          <rect x={px(i + 1) - 2} y={py(h) - 2} width="5" height="5" fill="#000" />
          <text x={px(i + 1) + 3} y={py(h) + 4} fontSize="11" fill="#222">{labels[i]}</text>
        </g>
      ))}
      <rect x="287.5" y="13.5" width="32" height="12" fill="#fff" stroke="#777" />
      <rect x="296" y="17" width="5" height="5" fill="#000" />
      <text x="315" y="23" fontSize="9" textAnchor="middle" fill="#333">A</text>
      <text x="203" y="277" fontSize="11" textAnchor="middle" fill="#333">行号</text>
      <text transform="translate(54 141) rotate(-90)" fontSize="9" textAnchor="middle" fill="#333">A</text>
    </svg>
  );
}

function GraphWindow() {
  return (
    <section
      aria-label="Graph1"
      className="absolute top-[11px] left-[234px] w-[397px] rounded-t-sm border-x-4 border-b-4 border-[#5688d4] bg-[#5688d4] shadow-[0_0_2px_#555]"
    >
      <div className="flex h-[17px] items-center pl-px">
        <svg viewBox="0 0 16 16" className="h-[8px] w-[8px]" aria-hidden="true">
          <rect x="1" y="1" width="14" height="14" fill="#40d0c0" stroke="#203040" strokeWidth="1.5" />
          <path d="M3 6l3-2 3 2 4-2M3 11l4-1 3 2 3-2" stroke="#a02040" fill="none" strokeWidth="1.5" />
        </svg>
        <h2 className="ml-[2px] flex-1 font-['Open_Sans',sans-serif] text-[7px] leading-[10px] text-[#14203c]">Graph1 *</h2>
        <WindowButtons color="#14203c" />
      </div>
      <div className="relative">
        <Plot />
        <span className="absolute top-0 left-0 flex h-[11px] w-[11px] items-center justify-center bg-[#6497cc] font-['Liberation_Sans',sans-serif] text-[9px] leading-[11px] font-bold text-white">
          1
        </span>
      </div>
    </section>
  );
}

export default function App() {
  return (
    <div className="flex h-screen flex-col overflow-hidden bg-[#ababab] font-['Liberation_Sans','Noto_Sans_CJK_SC',sans-serif]">
      <Header />
      <div className="flex min-h-0 flex-1">
        <Sidebar />
        <main className="relative min-w-0 flex-1 overflow-hidden bg-[#ababab]">
          <BookWindow />
          <GraphWindow />
        </main>
      </div>
    </div>
  );
}
